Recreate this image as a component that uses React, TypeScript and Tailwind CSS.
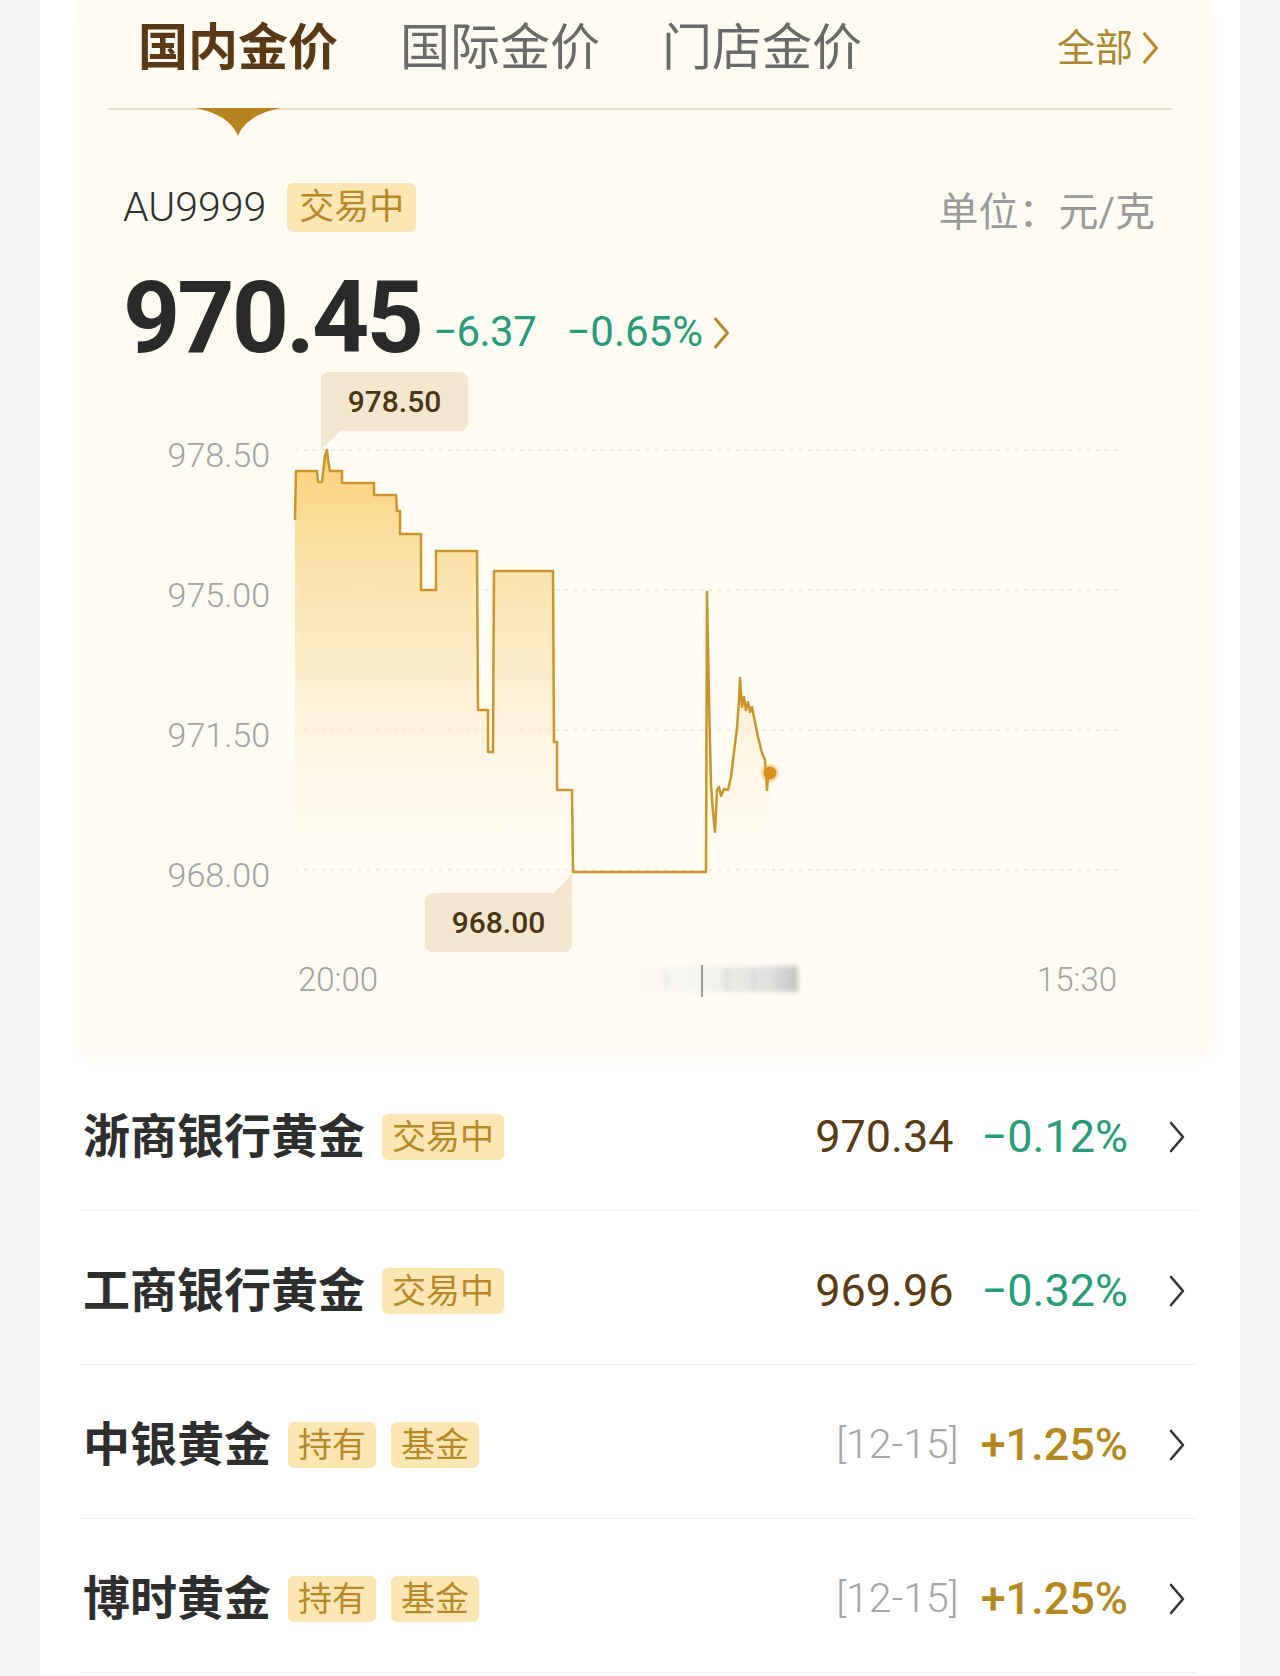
import React from 'react';

const LINE =
  'M295,520 L296,471 L317,471 L318,482 L322,482 L325,456 L327,450 L328,460 L330,471 L342,471 L342,483 L374,483 L374,495 L396,495 L397,511 L400,511 L400,534 L421,534 L421,590 L436,590 L436,551 L477,551 L478,710 L488,710 L488,752 L493,752 L494,571 L553,571 L554,742 L557,742 L557,790 L572,790 L573,872 L706,872 L707,592 L709,700 L711,785 L713,812 L715,832 L717,790 L719,787 L721,796 L724,789 L728,790 L731,777 L734,752 L737,728 L739,700 L740,678 L742,707 L744,697 L746,710 L748,702 L750,712 L752,707 L754,717 L758,737 L762,753 L765,760 L767,790 L768,776 L770,773';

const FILL = LINE + ' L770,900 L295,900 Z';

function Chevron({ className, width = 2.6 }: { className: string; width?: number }) {
  return (
    <svg viewBox="0 0 18 34" className={className} fill="none">
      <path d="M3 3 L15 17 L3 31" stroke="currentColor" strokeWidth={width} strokeLinecap="round" strokeLinejoin="round" />
    </svg>
  );
}

function Tag({ children }: { children: React.ReactNode }) {
  return (
    <span className="flex h-[46px] items-center rounded-[6px] bg-[#fbe6b4] px-[10px] text-[34px] leading-none text-[#b68a2a]">
      {children}
    </span>
  );
}

function Chart() {
  return (
    <div className="relative h-[642px] w-[1135px]">
      <svg viewBox="78 368 1135 642" width="1135" height="642" className="block">
        <defs>
          <linearGradient id="goldFill" gradientUnits="userSpaceOnUse" x1="0" y1="450" x2="0" y2="900">
            <stop offset="0" stopColor="#f9cc6c" stopOpacity="0.9" />
            <stop offset="0.45" stopColor="#fbdfa2" stopOpacity="0.55" />
            <stop offset="1" stopColor="#fffaf0" stopOpacity="0" />
          </linearGradient>
          <linearGradient id="blurGrad" x1="0" y1="0" x2="1" y2="0">
            <stop offset="0" stopColor="#f0f0f0" stopOpacity="0" />
            <stop offset="0.5" stopColor="#e8e8e8" stopOpacity="0.5" />
            <stop offset="0.85" stopColor="#dadada" stopOpacity="0.85" />
            <stop offset="1" stopColor="#c2c2c2" stopOpacity="1" />
          </linearGradient>
          <filter id="soft" x="-10%" y="-30%" width="120%" height="160%">
            <feGaussianBlur stdDeviation="2.5" />
          </filter>
        </defs>

        {[450, 590, 730, 870].map((y) => (
          <line key={y} x1="295" x2="1117" y1={y} y2={y} stroke="#ede6d6" strokeWidth="1.5" strokeDasharray="3 6" />
        ))}

        {[
          ['978.50', 467],
          ['975.00', 607],
          ['971.50', 747],
          ['968.00', 887],
        ].map(([t, y]) => (
          <text key={t as string} x="270" y={y as number} textAnchor="end" fontSize="34" fontWeight="300" fill="#a3a3a3">
            {t}
          </text>
        ))}

        <path d={FILL} fill="url(#goldFill)" />
        <path d={LINE} fill="none" stroke="#c9962c" strokeWidth="2.5" strokeLinejoin="round" />
        <circle cx="770" cy="773" r="9" fill="#e3a23a" opacity="0.35" />
        <circle cx="770" cy="773" r="6.5" fill="#d9921f" />

        <path d="M321,425 L321,449 L341,431 Z" fill="#f3e7cf" />
        <path d="M550,897 L572,874 L572,897 Z" fill="#f3e7cf" />

        <text x="298" y="991" fontSize="33" fontWeight="300" fill="#a3a3a3">20:00</text>
        <text x="1117" y="991" textAnchor="end" fontSize="33" fontWeight="300" fill="#a3a3a3">15:30</text>

        <g filter="url(#soft)">
          <rect x="614" y="966" width="184" height="26" fill="url(#blurGrad)" />
          <rect x="665" y="970" width="3" height="20" fill="#e6e6e6" />
          <rect x="725" y="970" width="4" height="20" fill="#dcdcdc" />
          <rect x="752" y="970" width="4" height="20" fill="#d6d6d6" />
        </g>
        <rect x="701" y="965" width="2" height="32" fill="#9a9a9a" />
      </svg>

      <div className="absolute left-[243px] top-[4px] flex h-[59px] w-[147px] items-center justify-center rounded-[8px] bg-[#f3e7cf] text-[30px] font-medium leading-none text-[#4a3516]">
        978.50
      </div>
      <div className="absolute left-[347px] top-[525px] flex h-[59px] w-[147px] items-center justify-center rounded-[8px] bg-[#f3e7cf] text-[30px] font-medium leading-none text-[#4a3516]">
        968.00
      </div>
    </div>
  );
}

const rows = [
  { name: '浙商银行黄金', tags: ['交易中'], left: '970.34', pct: '−0.12%', kind: 'price' },
  { name: '工商银行黄金', tags: ['交易中'], left: '969.96', pct: '−0.32%', kind: 'price' },
  { name: '中银黄金', tags: ['持有', '基金'], left: '[12-15]', pct: '+1.25%', kind: 'fund' },
  { name: '博时黄金', tags: ['持有', '基金'], left: '[12-15]', pct: '+1.25%', kind: 'fund' },
];

export default function App() {
  return (
    <div className="h-[1676px] w-[1280px] overflow-hidden bg-[#f4f4f4] font-[family-name:Roboto,'Noto_Sans_CJK_SC',sans-serif]">
      <div className="ml-[40px] h-full w-[1200px] bg-white">
        <div className="ml-[38px] w-[1135px] rounded-b-[10px] bg-[#fefbf2] pb-[42px] shadow-[0_8px_18px_rgba(210,180,110,0.08)]">
          {/* tabs */}
          <div className="flex h-[108px] items-center pb-[12px] pl-[60px] pr-[53px]">
            <div className="flex items-center gap-[62px] text-[50px] leading-none">
              <span className="font-bold text-[#5a3916]">国内金价</span>
              <span className="text-[#6a6a6a]">国际金价</span>
              <span className="text-[#6a6a6a]">门店金价</span>
            </div>
            <div className="ml-auto flex items-center gap-[8px] text-[38px] leading-none text-[#a98630]">
              <span>全部</span>
              <Chevron className="h-[34px] w-[19px] text-[#b08c2e]" width={3.2} />
            </div>
          </div>
          <div className="relative ml-[30px] mr-[41px] h-[2px] bg-[#e6dfc4]">
            <svg viewBox="0 0 86 30" width="86" height="30" className="absolute left-[87px] top-0">
              <path d="M0,0 L86,0 C70,3 50,10 43,28 C36,10 16,3 0,0 Z" fill="#b8821f" />
            </svg>
          </div>

          {/* code row */}
          <div className="mt-[73px] flex h-[49px] items-center pl-[45px] pr-[58px]">
            <span className="text-[41px] font-light leading-none text-[#2f2f2f]">AU9999</span>
            <span className="ml-[21px] flex h-[49px] items-center rounded-[6px] bg-[#fbe6b4] px-[12px] text-[35px] leading-none text-[#b68a2a]">
              交易中
            </span>
            <span className="ml-auto mt-[10px] text-[40px] leading-none text-[#9a9a9a]">单位：元/克</span>
          </div>

          {/* price row */}
          <div className="mt-[36px] flex h-[100px] items-end pl-[45px]">
            <span className="text-[100px] font-bold leading-none tracking-[-3px] text-[#2a2a2a]">970.45</span>
            <span className="mb-[15px] ml-[12px] text-[42px] leading-none tracking-[-0.5px] text-[#2a9b78]">−6.37</span>
            <span className="mb-[15px] ml-[30px] text-[42px] leading-none text-[#2a9b78]">−0.65%</span>
            <Chevron className="mb-[18px] ml-[9px] h-[34px] w-[19px] text-[#b08c2e]" width={3} />
          </div>

          <Chart />
        </div>

        {/* list */}
        <div className="ml-[38px] mt-[5px] w-[1119px]">
          {rows.map((r) => (
            <div key={r.name} className="flex h-[154px] items-center border-b border-[#efefef] pl-[5px] pr-[11px] pt-[6px]">
              <span className="text-[47px] font-bold leading-none text-[#2e2e2e]">{r.name}</span>
              <div className="ml-[17px] flex items-center gap-[15px]">
                {r.tags.map((t) => (
                  <Tag key={t}>{t}</Tag>
                ))}
              </div>
              <div className="ml-auto flex items-center">
                {r.kind === 'price' ? (
                  <span className="text-[45px] leading-none text-[#5a3c13]">{r.left}</span>
                ) : (
                  <span className="text-[41px] font-light leading-none text-[#a6a6a6]">{r.left}</span>
                )}
                {r.kind === 'price' ? (
                  <span className="ml-[28px] text-[45px] leading-none text-[#2a9b78]">{r.pct}</span>
                ) : (
                  <span className="ml-[22px] text-[45px] font-medium leading-none text-[#b3891f]">{r.pct}</span>
                )}
                <Chevron className="ml-[40px] h-[34px] w-[18px] text-[#333333]" />
              </div>
            </div>
          ))}
        </div>
      </div>
    </div>
  );
}
